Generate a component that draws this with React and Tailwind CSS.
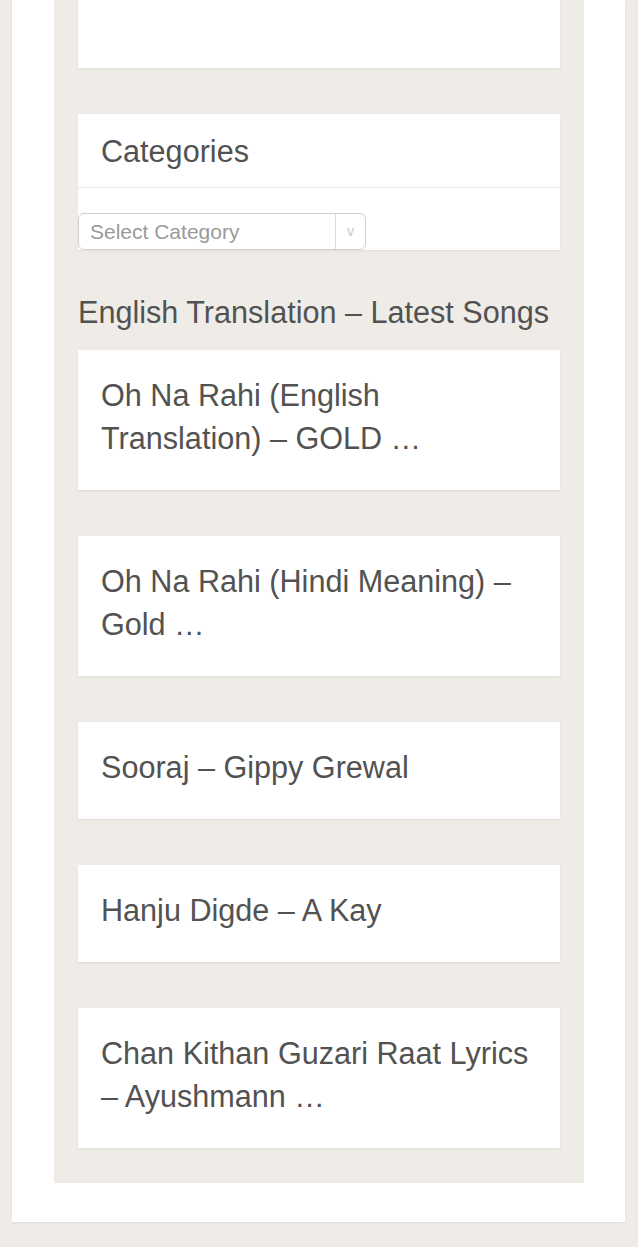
export default function App() {
  const songs = [
    "Oh Na Rahi (English Translation) – GOLD …",
    "Oh Na Rahi (Hindi Meaning) – Gold …",
    "Sooraj – Gippy Grewal",
    "Hanju Digde – A Kay",
    "Chan Kithan Guzari Raat Lyrics – Ayushmann …",
  ];
  return (
    <div
      className="min-h-[1247px] bg-[#efece8] pl-[12px] pr-[13px] pb-[25px] text-[#525252]"
      style={{ fontFamily: '"Liberation Sans", Arial, sans-serif' }}
    >
      <div className="bg-white pl-[42px] pr-[41px] pb-[39px] shadow-[0_1px_2px_rgba(0,0,0,0.06)]">
        <div className="bg-[#efece8] px-[24px] pb-[35px] flex flex-col">
          <div className="h-[68px] bg-white shadow-[0_1px_2px_rgba(0,0,0,0.08)]" />

          <div className="mt-[46px] bg-white shadow-[0_1px_2px_rgba(0,0,0,0.06)]">
            <div className="h-[74px] flex items-center pt-[3px] px-[23px] border-b border-[#e6e6e6] text-[30.6px]">
              Categories
            </div>
            <div className="pt-[25px]">
              <div className="w-[288px] h-[37px] rounded-[6px] border border-[#cfcfcf] flex items-center bg-white">
                <span className="flex-1 pl-[11px] pt-[1px] text-[21px] text-[#9a9a9a]">Select Category</span>
                <span className="w-[30px] h-full border-l border-[#dcdcdc] flex items-center justify-center text-[#c8c8c8] text-[14px]">
                  v
                </span>
              </div>
            </div>
          </div>

          <h2 className="pt-[41px] pb-[16px] text-[30.6px] leading-[43px] font-normal">
            English Translation – Latest Songs
          </h2>

          <div className="flex flex-col gap-[46px]">
            {songs.map((s) => (
              <div
                key={s}
                className="bg-white pt-[24px] pb-[30px] pl-[23px] pr-[24px] text-[30.6px] leading-[43px] shadow-[0_1px_2px_rgba(0,0,0,0.08)]"
              >
                {s}
              </div>
            ))}
          </div>
        </div>
      </div>
    </div>
  );
}
